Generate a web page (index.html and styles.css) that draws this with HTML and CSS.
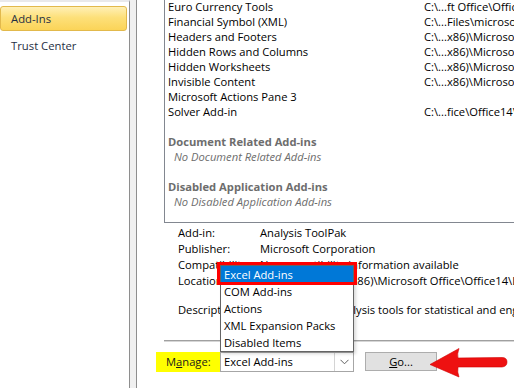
FILE: index.html
```html
<!DOCTYPE html>
<html>
<head>
<meta charset="utf-8">
<link rel="stylesheet" href="styles.css">
</head>
<body>
<div class="window">
  <nav class="nav">
    <div class="nav-item selected">Add-Ins</div>
    <div class="nav-item">Trust Center</div>
  </nav>
  <div class="divider"></div>
  <main class="main">
    <div class="listbox">
      <div class="row"><span class="name">Euro Currency Tools</span><span class="path">C:\...ft Office\Office14\Library\EUROTOOL.XLAM</span></div>
      <div class="row"><span class="name">Financial Symbol (XML)</span><span class="path">C:\...Files\microsoft shared\Smart Tag\MOFL.DLL</span></div>
      <div class="row"><span class="name">Headers and Footers</span><span class="path">C:\...x86)\Microsoft Office\Office14\OFFRHD.DLL</span></div>
      <div class="row"><span class="name">Hidden Rows and Columns</span><span class="path">C:\...x86)\Microsoft Office\Office14\OFFRHD.DLL</span></div>
      <div class="row"><span class="name">Hidden Worksheets</span><span class="path">C:\...x86)\Microsoft Office\Office14\OFFRHD.DLL</span></div>
      <div class="row"><span class="name">Invisible Content</span><span class="path">C:\...x86)\Microsoft Office\Office14\OFFRHD.DLL</span></div>
      <div class="row"><span class="name">Microsoft Actions Pane 3</span><span class="path"></span></div>
      <div class="row"><span class="name">Solver Add-in</span><span class="path">C:\...fice\Office14\Library\SOLVER\SOLVER.XLAM</span></div>
      <div class="row blank"></div>
      <div class="row group">Document Related Add-ins</div>
      <div class="row empty">No Document Related Add-ins</div>
      <div class="row blank"></div>
      <div class="row group">Disabled Application Add-ins</div>
      <div class="row empty">No Disabled Application Add-ins</div>
    </div>

    <div class="details">
      <div class="drow"><span class="dlabel">Add-in:</span><span class="dval">Analysis ToolPak</span></div>
      <div class="drow"><span class="dlabel">Publisher:</span><span class="dval">Microsoft Corporation</span></div>
      <div class="drow"><span class="dlabel">Compatibility:</span><span class="dval">No compatibility information available</span></div>
      <div class="drow"><span class="dlabel">Location:</span><span class="dval">C:\Program Files (x86)\Microsoft Office\Office14\Library\Analysis\ANALYS32.XLL</span></div>
      <div class="drow desc"><span class="dlabel">Description:</span><span class="dval">Provides data analysis tools for statistical and engineering analysis.</span></div>
    </div>

    <div class="separator"></div>

    <div class="manage-row">
      <label class="manage-label">M<u>a</u>nage:</label>
      <div class="combo">
        <span class="combo-text">Excel Add-ins</span>
        <span class="combo-btn">
          <svg width="9" height="6" viewBox="0 0 9 6"><path d="M0.5 0.8 L4.5 4.8 L8.5 0.8" fill="none" stroke="#606060" stroke-width="1"/></svg>
        </span>
        <ul class="dropdown">
          <li class="opt active">Excel Add-ins</li>
          <li class="opt">COM Add-ins</li>
          <li class="opt">Actions</li>
          <li class="opt">XML Expansion Packs</li>
          <li class="opt">Disabled Items</li>
        </ul>
      </div>
      <button class="go-btn"><u>G</u>o...</button>
    </div>
  </main>
  <svg class="arrow" width="90" height="34" viewBox="0 0 90 34">
    <path d="M0 16.5 L29 0.5 Q27 6 28 10 L72 9.5 Q77 9.5 77 14 Q77 18.5 72 19 L28 19 Q27 24 29 29 Z" fill="#ee1111" stroke="#d00000" stroke-width="0.6"/>
  </svg>
</div>
</body>
</html>
```

FILE: styles.css
```css
* { box-sizing: border-box; }
html, body {
  margin: 0;
  padding: 0;
  background: #ffffff;
}
body {
  width: 514px;
  height: 388px;
  overflow: hidden;
  font-family: "Open Sans", "Noto Sans", sans-serif;
  font-size: 11.2px;
  color: #000;
}
.window {
  position: relative;
  display: flex;
  height: 388px;
}
.nav {
  width: 130px;
  flex: none;
  border-top: 2px solid #e9e9eb;
  border-right: 1px solid #8e8e8e;
  padding-top: 4px;
}
.nav-item {
  height: 25px;
  line-height: 25px;
  padding-left: 11px;
  color: #1f2f44;
  font-size: 11.3px;
  margin-right: 2px;
}
.nav-item.selected {
  line-height: 24px;
  border: 1px solid #e2b94c;
  border-radius: 3px;
  background: linear-gradient(#fff0b6, #fde07a 45%, #fbd458);
  padding-left: 10px;
  margin-bottom: 2px;
}
.divider {
  width: 7px;
  flex: none;
  background: #f0f0f0;
  border-right: 1px solid #8e8e8e;
}
.main {
  flex: 1;
  min-width: 0;
  padding-left: 27px;
  overflow: hidden;
}
.listbox {
  margin-top: -2px;
  margin-right: -60px;
  border: 1px solid #828790;
  padding: 0 0 13px 3px;
}
.row {
  height: 15px;
  line-height: 15px;
  display: flex;
  white-space: nowrap;
}
.row .name {
  width: 256px;
  flex: none;
}
.row .path {
  white-space: nowrap;
}
.row.group {
  font-weight: bold;
  color: #6d6d6d;
}
.row.empty {
  font-style: italic;
  color: #6d6d6d;
  padding-left: 6px;
}
.details {
  padding: 2px 0 0 14px;
}
.drow {
  height: 16px;
  line-height: 16px;
  display: flex;
  white-space: nowrap;
}
.drow.desc {
  margin-top: 13px;
}
.dlabel {
  width: 82px;
  flex: none;
}
.separator {
  margin-top: 22px;
  height: 2px;
  border-top: 1px solid #a0a0a0;
  border-bottom: 1px solid #d6d6d6;
}
.manage-row {
  display: flex;
  align-items: flex-start;
  margin-top: 10px;
  margin-left: -8px;
}
.manage-label {
  width: 64px;
  height: 20px;
  line-height: 20px;
  background: #ffff00;
  padding-left: 10px;
  color: #1a1a1a;
}
.combo {
  position: relative;
  width: 134px;
  height: 20px;
  border: 1px solid #a6a6a6;
  background: #fff;
  display: flex;
}
.combo-text {
  flex: 1;
  line-height: 18px;
  padding-left: 3px;
}
.combo-btn {
  width: 19px;
  height: 18px;
  border-left: 1px solid #d4d4d4;
  display: flex;
  align-items: center;
  justify-content: center;
}
.dropdown {
  position: absolute;
  left: -1px;
  bottom: 100%;
  width: 134px;
  margin: 0 0 1px 0;
  padding: 0;
  list-style: none;
  border: 1px solid #646464;
  background: #fff;
  box-shadow: 2px 2px 3px rgba(0,0,0,0.15);
}
.opt {
  height: 17px;
  line-height: 17px;
  padding-left: 3px;
  white-space: nowrap;
}
.opt.active {
  position: relative;
  background: #0078d7;
  color: #fff;
}
.opt.active::after {
  content: "";
  position: absolute;
  top: -4px;
  left: -4px;
  right: -4px;
  bottom: -2px;
  border: 3px solid #ff0000;
}
.go-btn {
  margin-left: 11px;
  width: 72px;
  height: 19px;
  background: #e1e1e1;
  border: 1px solid #adadad;
  font-family: inherit;
  font-size: 11.2px;
  padding: 0;
  line-height: 16px;
  color: #000;
}
.arrow {
  position: absolute;
  left: 430px;
  top: 348px;
}
```
